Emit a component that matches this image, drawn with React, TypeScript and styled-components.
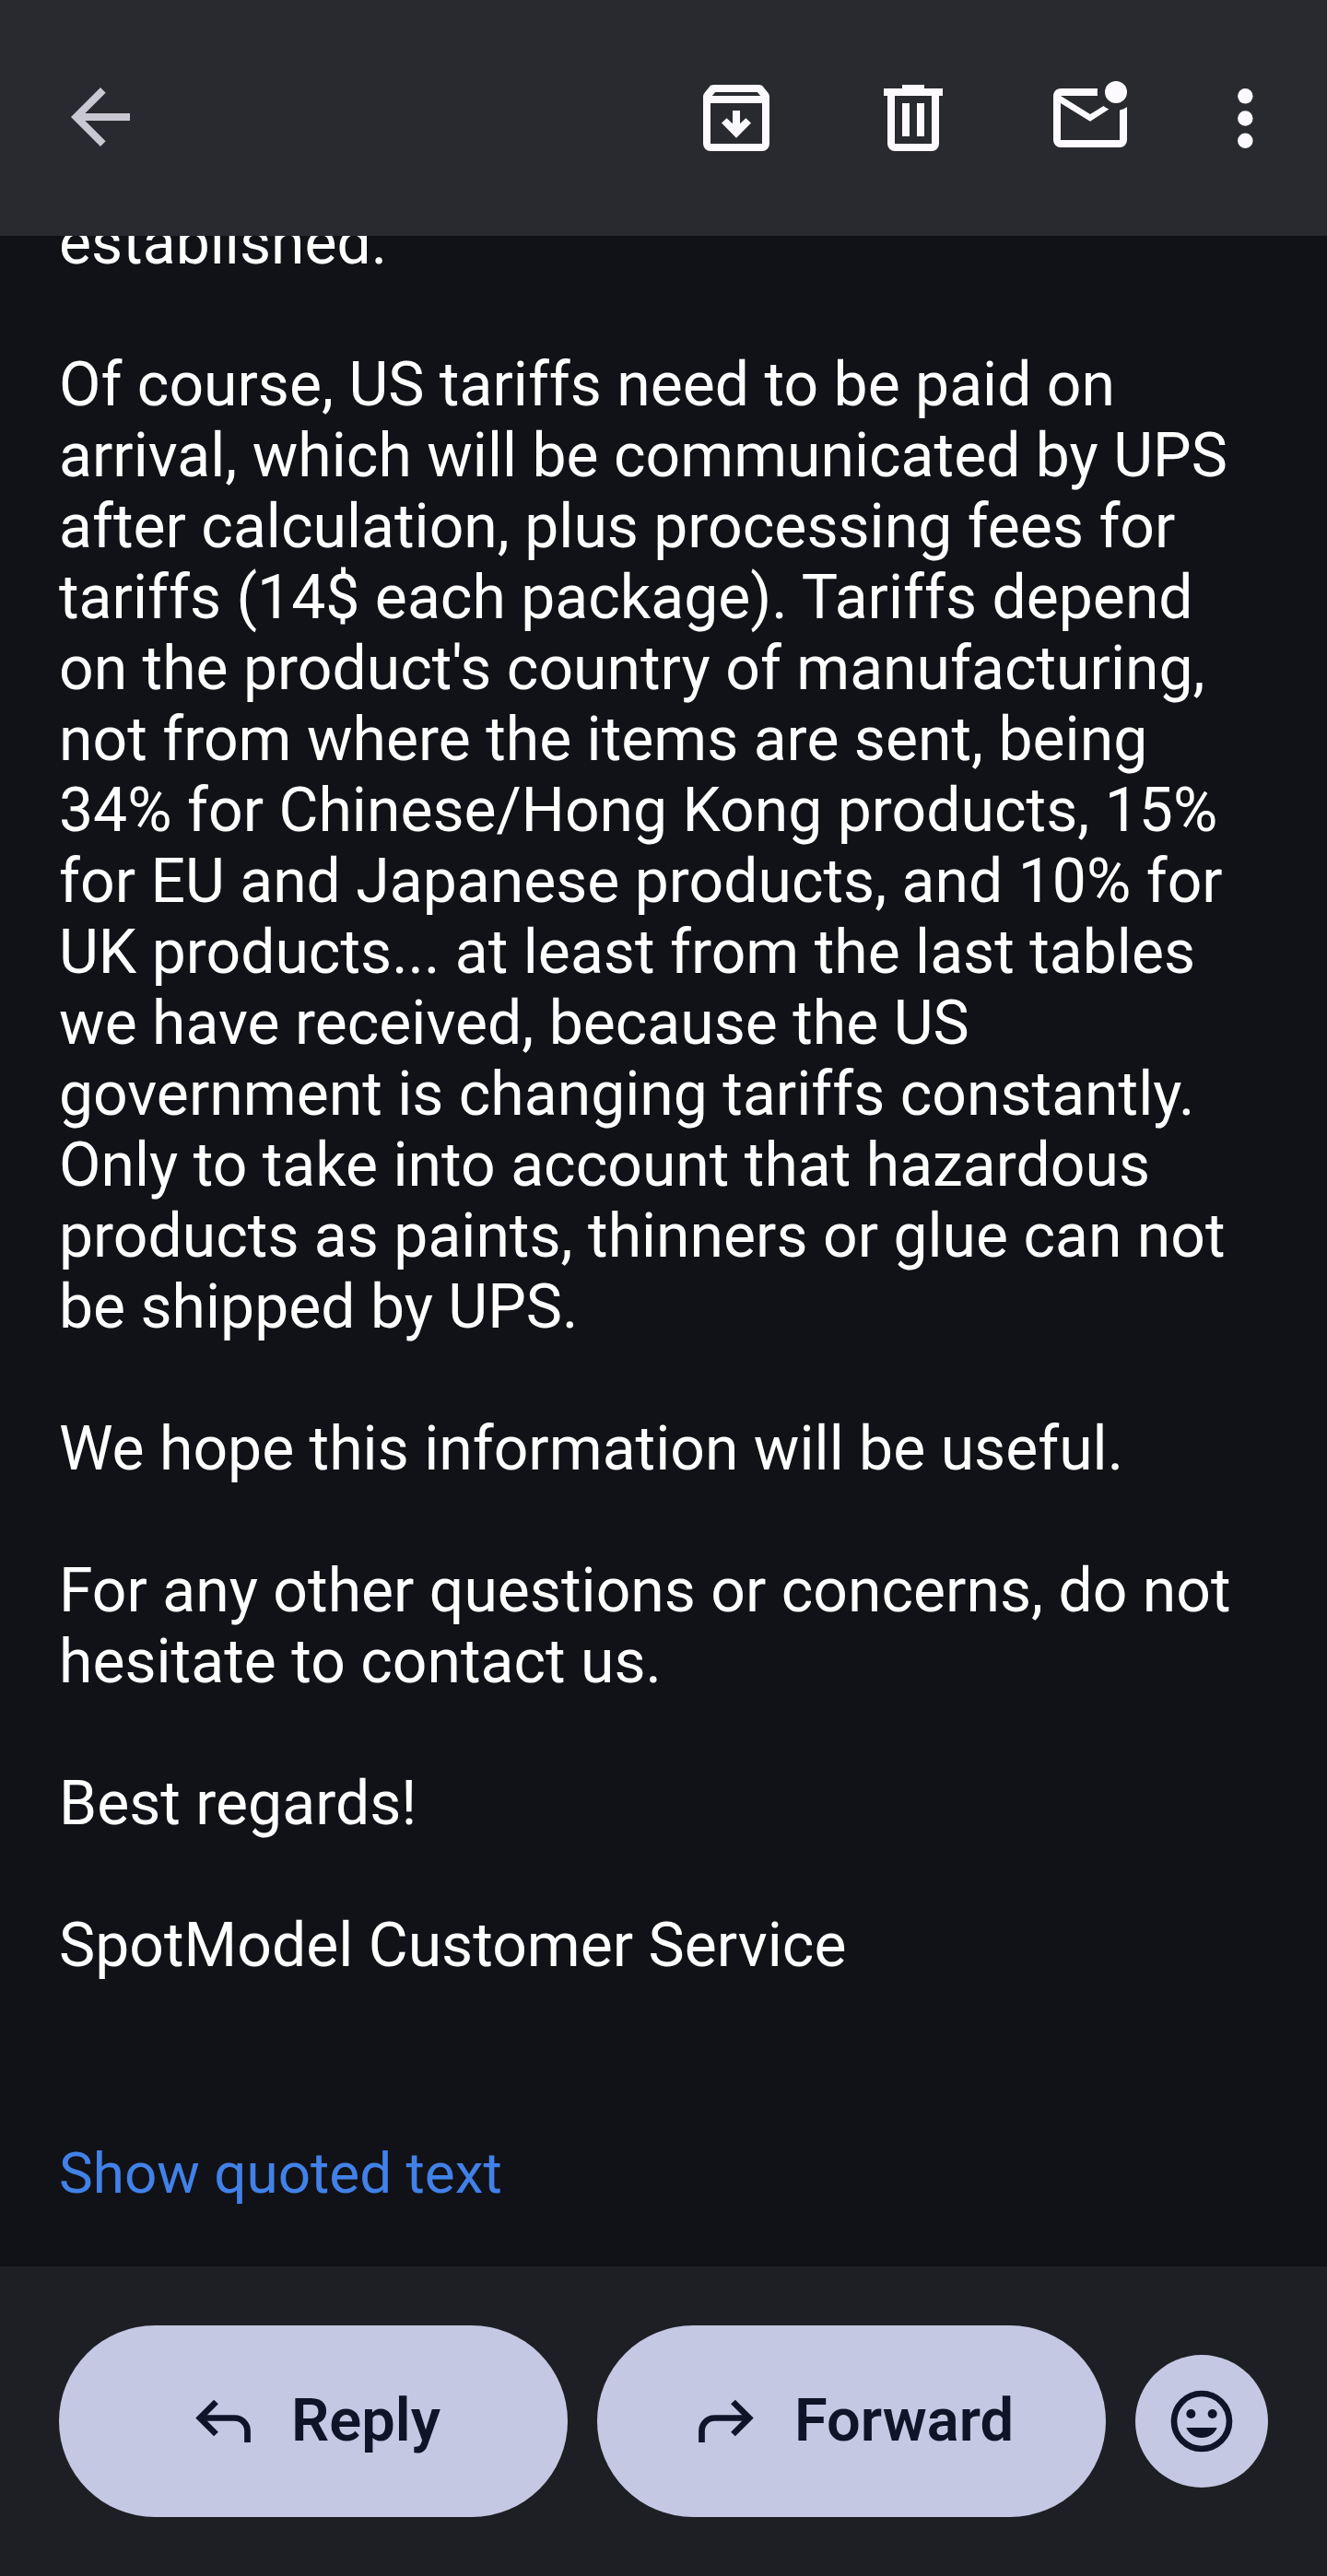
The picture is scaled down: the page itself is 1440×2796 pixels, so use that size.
import React from "react";
import styled, { createGlobalStyle } from "styled-components";

const GlobalStyle = createGlobalStyle`
  html, body { margin: 0; padding: 0; background: #111217; }
  * { box-sizing: border-box; }
  button { border: 0; padding: 0; margin: 0; background: none; font: inherit; cursor: pointer; }
`;

const Screen = styled.div`
  display: flex;
  flex-direction: column;
  width: 1440px;
  height: 2796px;
  overflow: hidden;
  background: #111217;
  font-family: Roboto, "Liberation Sans", sans-serif;
`;

const TopBar = styled.header`
  flex: none;
  display: flex;
  justify-content: space-between;
  height: 256px;
  padding: 80px 41px 0 61px;
  background: #292a2f;
`;

const Actions = styled.div`
  display: flex;
  gap: 96px;
  margin-left: 96px;
`;

const IconFrame = styled.button<{ $color?: string; $pull?: number }>`
  display: block;
  width: 96px;
  height: 96px;
  margin-left: ${(p) => p.$pull ?? 0}px;
  color: ${(p) => p.$color ?? "#fcfaff"};
`;

const Glyph = styled.svg<{ $size?: number }>`
  display: block;
  flex: none;
  width: ${(p) => p.$size ?? 96}px;
  height: ${(p) => p.$size ?? 96}px;
  fill: currentColor;
`;

const Message = styled.main`
  flex: 1;
  display: flex;
  flex-direction: column;
  align-items: flex-start;
  overflow: hidden;
  padding: 0 64px;
`;

const Copy = styled.div`
  margin-top: -31px;
  color: #ffffff;
  font-size: 66px;
  line-height: 77px;
  letter-spacing: 0.03px;
  white-space: nowrap;
`;

const Paragraph = styled.p`
  margin: 0 0 77px;
`;

const Line = styled.span`
  display: block;
`;

const QuoteToggle = styled.button`
  margin-top: 95px;
  color: #4181e8;
  font-size: 62px;
  line-height: 74px;
  white-space: nowrap;
`;

const BottomBar = styled.footer`
  flex: none;
  display: flex;
  align-items: flex-start;
  gap: 32px;
  height: 336px;
  padding: 64px 64px 0;
  background: #1e1f24;
  color: #0f1528;
`;

const PillButton = styled.button<{ $inset: number; $gap: number }>`
  display: flex;
  align-items: center;
  gap: ${(p) => p.$gap}px;
  width: 552px;
  height: 208px;
  padding: 0 0 2px ${(p) => p.$inset}px;
  border-radius: 104px;
  background: #c5c8e3;
  color: inherit;
`;

const PillLabel = styled.span`
  font-size: 65px;
  font-weight: 600;
  line-height: 76px;
`;

const ReactionButton = styled.button`
  display: flex;
  align-items: center;
  justify-content: center;
  width: 144px;
  height: 144px;
  margin-top: 32px;
  border-radius: 50%;
  background: #c5c8e3;
  color: inherit;
`;

const paragraphs: string[][] = [
  ["established."],
  [
    "Of course, US tariffs need to be paid on",
    "arrival, which will be communicated by UPS",
    "after calculation, plus processing fees for",
    "tariffs (14$ each package). Tariffs depend",
    "on the product's country of manufacturing,",
    "not from where the items are sent, being",
    "34% for Chinese/Hong Kong products, 15%",
    "for EU and Japanese products, and 10% for",
    "UK products... at least from the last tables",
    "we have received, because the US",
    "government is changing tariffs constantly.",
    "Only to take into account that hazardous",
    "products as paints, thinners or glue can not",
    "be shipped by UPS.",
  ],
  ["We hope this information will be useful."],
  ["For any other questions or concerns, do not", "hesitate to contact us."],
  ["Best regards!"],
  ["SpotModel Customer Service"],
];

const BackIcon = () => (
  <Glyph viewBox="0 0 24 24">
    <path transform="translate(0 -.25)" d="M20 11H7.83l5.59-5.59L12 4l-8 8 8 8 1.41-1.41L7.83 13H20v-2z" />
  </Glyph>
);

const ArchiveIcon = () => (
  <Glyph viewBox="0 0 24 24">
    <path
      fillRule="evenodd"
      d="M5.9 3h12.2c.5 0 .95.2 1.25.6l1.2 1.5c.3.35.45.75.45 1.2V19a2 2 0 0 1-2 2H5a2 2 0 0 1-2-2V6.3c0-.45.15-.85.45-1.2l1.2-1.5c.3-.4.75-.6 1.25-.6ZM5.45 6h13.1l-.85-1H6.3l-.85 1ZM5 8v11h14V8H5Z"
    />
    <path d="M11 10h2v3.55l1.6-1.5L16 13.4l-4 4.05-4-4.05 1.4-1.35 1.6 1.5V10Z" />
  </Glyph>
);

const DeleteIcon = () => (
  <Glyph viewBox="0 0 24 24">
    <path
      fillRule="evenodd"
      d="M9 3h6v1h5v2h-1v13a2 2 0 0 1-2 2H7a2 2 0 0 1-2-2V6H4V4h5V3ZM7 6v13h10V6H7Zm2 2h2v9H9V8Zm4 0h2v9h-2V8Z"
    />
  </Glyph>
);

const UnreadIcon = () => (
  <Glyph viewBox="0 0 24 24">
    <path d="M14 4c-.07.65-.07 1.35 0 2H4l8 5 3.63-2.27c.43.38.93.68 1.47.9L12 12.95 4 8v10h16V9.9c.73-.15 1.4-.46 2-.9v9a2 2 0 0 1-2 2H4a2 2 0 0 1-2-2V6c0-1.1.9-2 2-2h10Z" />
    <circle cx="19" cy="5" r="3" />
  </Glyph>
);

const MoreIcon = () => (
  <Glyph viewBox="0 0 24 24">
    <circle cx="12.08" cy="6.08" r="2.06" />
    <circle cx="12.08" cy="12.13" r="2.06" />
    <circle cx="12.08" cy="18.18" r="2.06" />
  </Glyph>
);

const TurnArrow = ({ flipped = false }: { flipped?: boolean }) => (
  <Glyph $size={72} viewBox="0 0 72 72">
    <g
      transform={flipped ? "matrix(-1 0 0 1 72 0)" : undefined}
      fill="none"
      stroke="currentColor"
      strokeWidth="6.7"
    >
      <path d="M26.5 16 9 33.500 26.500 51" />
      <path d="M9 33.500H46.500A14 14 0 0 1 60.500 47.500V60" />
    </g>
  </Glyph>
);

const SmileIcon = () => (
  <Glyph $size={80} viewBox="0 0 24 24">
    <circle cx="12" cy="12" r="9" fill="none" stroke="currentColor" strokeWidth="2" />
    <circle cx="8.5" cy="9.6" r="1.5" />
    <circle cx="15.5" cy="9.6" r="1.5" />
    <path d="M7 14.1h10c-.8 2-2.700 3.300-5 3.300S7.800 16.100 7 14.100Z" />
  </Glyph>
);

export default function App() {
  return (
    <Screen>
      <GlobalStyle />
      <TopBar>
        <IconFrame aria-label="Back" $color="#c9c8d2"><BackIcon /></IconFrame>
        <Actions>
          <IconFrame aria-label="Archive" $pull={-84}><ArchiveIcon /></IconFrame>
          <IconFrame aria-label="Delete"><DeleteIcon /></IconFrame>
          <IconFrame aria-label="Mark as unread"><UnreadIcon /></IconFrame>
          <IconFrame aria-label="More options" $pull={-24}><MoreIcon /></IconFrame>
        </Actions>
      </TopBar>
      <Message>
        <Copy>
          {paragraphs.map((lines) => (
            <Paragraph key={lines[0]}>
              {lines.map((line) => <Line key={line}>{line}</Line>)}
            </Paragraph>
          ))}
        </Copy>
        <QuoteToggle>Show quoted text</QuoteToggle>
      </Message>
      <BottomBar>
        <PillButton $inset={144} $gap={36}><TurnArrow /><PillLabel>Reply</PillLabel></PillButton>
        <PillButton $inset={102} $gap={40}><TurnArrow flipped /><PillLabel>Forward</PillLabel></PillButton>
        <ReactionButton aria-label="Add reaction"><SmileIcon /></ReactionButton>
      </BottomBar>
    </Screen>
  );
}
